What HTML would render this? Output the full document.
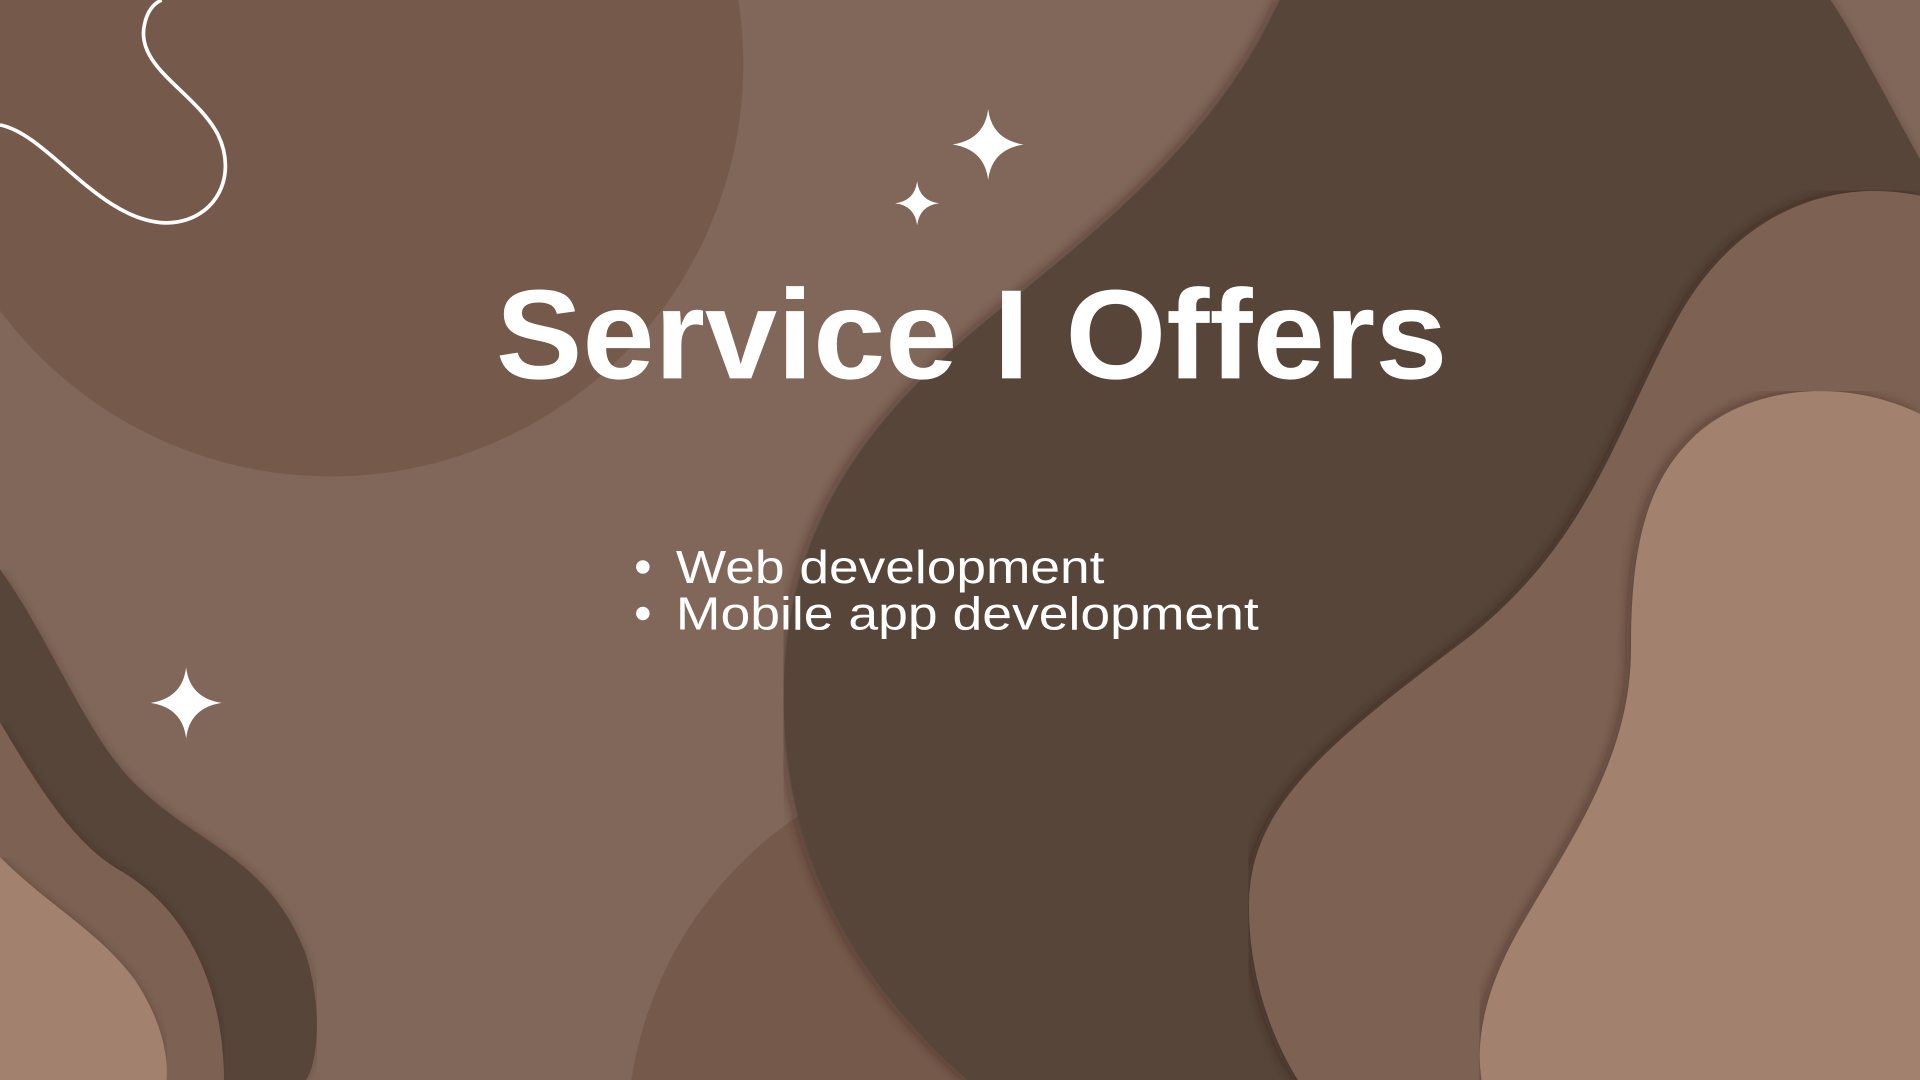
<!DOCTYPE html>
<html><head><meta charset="utf-8"><style>html,body{margin:0;padding:0;width:1920px;height:1080px;overflow:hidden;background:#806759;position:relative}svg{display:block;position:absolute;left:0;top:0;overflow:hidden}</style></head>
<body>
<svg width="1920" height="1080" viewBox="0 0 1568 882" xmlns="http://www.w3.org/2000/svg">
<defs>
<clipPath id="cp"><rect width="1568" height="882"/></clipPath>
<filter id="sh" x="0" y="0" width="100%" height="100%"><feDropShadow dx="-3" dy="0" stdDeviation="5" flood-color="#2a1f18" flood-opacity="0.45"/></filter>
</defs>
<g clip-path="url(#cp)">
<rect width="1568" height="882" fill="#806759"/>
<path d="M0,0 L603,0 A337,337 0 0 1 0,253.7 Z" fill="#755a4b"/>
<path d="M515.6,882 A318,318 0 0 1 1144.4,882 Z" fill="#755a4b"/>
<path filter="url(#sh)" d="M1045,0 C1000,100 920,170 820,250 C720,330 640,420 640,570 C640,720 720,820 790,882 L1568,882 L1568,130 C1540,80 1515,30 1495,0 Z" fill="#574539"/>
<path filter="url(#sh)" d="M1568,160 C1500,145 1420,170 1370,260 C1320,350 1300,440 1200,520 C1080,610 1020,660 1020,740 C1020,800 1040,850 1060,882 L1568,882Z" fill="#7d6253"/>
<path filter="url(#sh)" d="M1568,338 C1500,305 1420,318 1380,360 C1340,400 1332,460 1332,530 C1332,620 1280,690 1240,760 C1212,810 1205,850 1210,882 L1568,882Z" fill="#a2826e"/>
<path filter="url(#sh)" d="M0,465 C40,520 70,600 110,640 C160,690 220,700 250,780 C265,830 258,870 250,882 L0,882Z" fill="#574539"/>
<path filter="url(#sh)" d="M0,590 C30,640 60,690 100,712 C150,742 182,800 183,882 L0,882Z" fill="#7d6253"/>
<path filter="url(#sh)" d="M0,700 C40,740 80,760 110,800 C130,830 138,860 136,882 L0,882Z" fill="#a2826e"/>
<path d="M0,102 C40,110 80,180 135,182 C175,182 195,145 178,110 C160,75 110,55 118,20 C120,10 125,3 132,0" fill="none" stroke="#fff" stroke-width="3"/>
<g fill="#fff">
<path d="M807,89 Q810,114 836,118 Q810,122 807,147 Q804,122 778,118 Q804,114 807,89Z"/>
<path d="M749,148 Q751,164 767,166 Q751,168 749,184 Q747,168 731,166 Q747,164 749,148Z"/>
<path d="M152,545 Q155,570 181,574 Q155,578 152,603 Q149,578 123,574 Q149,570 152,545Z"/>
<circle cx="525" cy="463" r="5.5"/><circle cx="525" cy="501" r="5.5"/>
<text x="405" y="309" font-family="Liberation Sans, sans-serif" font-weight="bold" font-size="104" textLength="777" lengthAdjust="spacingAndGlyphs">Service I Offers</text>
<text x="552" y="476" font-family="Liberation Sans, sans-serif" font-size="38" textLength="350" lengthAdjust="spacingAndGlyphs">Web development</text>
<text x="552" y="514" font-family="Liberation Sans, sans-serif" font-size="38" textLength="476" lengthAdjust="spacingAndGlyphs">Mobile app development</text>
</g>
</g>
</svg>
</body></html>
